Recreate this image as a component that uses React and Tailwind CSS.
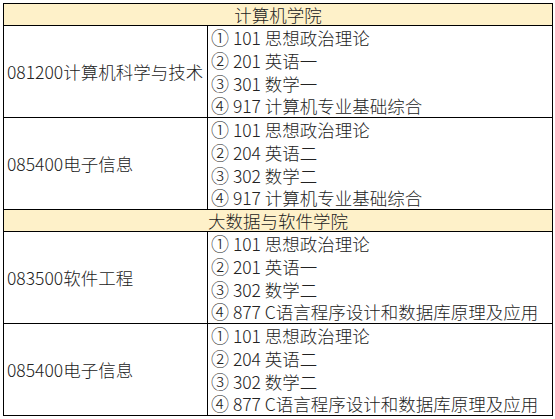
// Exam subjects table for two schools
import React from 'react';

const schools = [
  {
    name: '计算机学院',
    majors: [
      {
        code: '081200计算机科学与技术',
        subjects: [['①', '101 思想政治理论'], ['②', '201 英语一'], ['③', '301 数学一'], ['④', '917 计算机专业基础综合']],
      },
      {
        code: '085400电子信息',
        subjects: [['①', '101 思想政治理论'], ['②', '204 英语二'], ['③', '302 数学二'], ['④', '917 计算机专业基础综合']],
      },
    ],
  },
  {
    name: '大数据与软件学院',
    majors: [
      {
        code: '083500软件工程',
        subjects: [['①', '101 思想政治理论'], ['②', '201 英语一'], ['③', '302 数学二'], ['④', '877 C语言程序设计和数据库原理及应用']],
      },
      {
        code: '085400电子信息',
        subjects: [['①', '101 思想政治理论'], ['②', '204 英语二'], ['③', '302 数学二'], ['④', '877 C语言程序设计和数据库原理及应用']],
      },
    ],
  },
];

const App = () => {
  return (
    <div
      className="h-[419px] overflow-hidden bg-white pt-[3px] pl-[3px] text-[#222] text-[17.5px] font-light"
      style={{ fontFamily: '"Noto Sans CJK SC", "Noto Sans", sans-serif' }}
    >
      <table className="w-[550px] border-collapse border border-black table-fixed">
        <colgroup>
          <col className="w-[204px]" />
          <col />
        </colgroup>
        <tbody>
          {schools.map((school) => (
            <React.Fragment key={school.name}>
              {/* School header row */}
              <tr className="h-[22px] bg-[#fef1c9]">
                <td colSpan={2} className="border border-black text-center leading-[20px] p-0">
                  {school.name}
                </td>
              </tr>
              {school.majors.map((major) => (
                <tr key={school.name + major.code} className="h-[92px]">
                  <td className="border border-black p-0 pl-[3px] align-middle whitespace-nowrap leading-[22px]">
                    {major.code}
                  </td>
                  <td className="border border-black p-0 pl-[3px] align-middle">
                    {major.subjects.map(([num, text]) => (
                      <div key={num} className="h-[22.75px] leading-[22.75px] whitespace-nowrap">
                        <span className="text-[18px]">{num}</span> {text}
                      </div>
                    ))}
                  </td>
                </tr>
              ))}
            </React.Fragment>
          ))}
        </tbody>
      </table>
    </div>
  );
};

export default App;
